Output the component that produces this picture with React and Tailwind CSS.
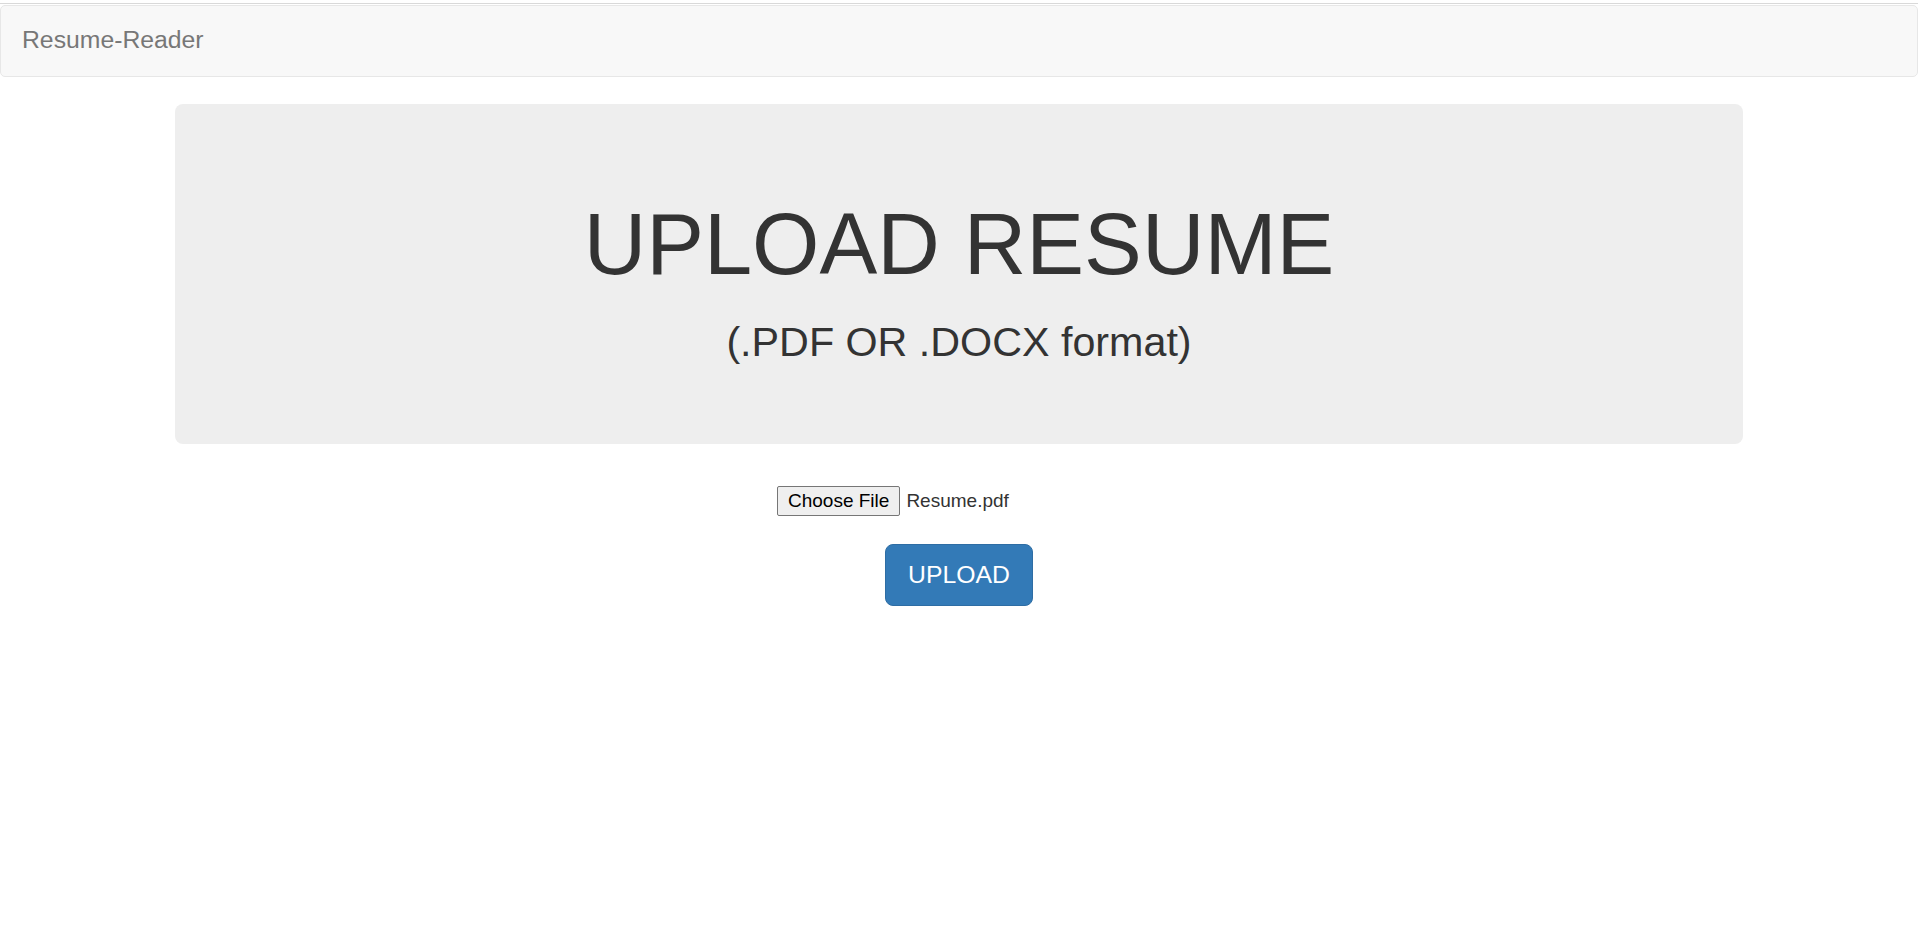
import React from 'react';

const App = () => {
    return (
        <div className="min-h-screen bg-white font-['Liberation_Sans',Arial,sans-serif] text-[#333]">
            <div className="pt-[3px]">
                <div className="h-px bg-[#d9d9d9]" />
            </div>
            <nav className="mt-px h-[72px] rounded-[5px] border border-[#e7e7e7] bg-[#f8f8f8] px-[21px] pt-[20px]">
                <a href="#" className="text-[24.75px] leading-[27.5px] text-[#777]">
                    Resume-Reader
                </a>
            </nav>

            <div className="mx-auto mt-[27px] w-[1568px]">
                <div className="h-[340px] rounded-[8px] bg-[#eeeeee] pt-[93px] text-center">
                    <h1 className="text-[86.6px] leading-[95px]">UPLOAD RESUME</h1>
                    <h2 className="mt-[28px] text-[41.25px] leading-[45px]">(.PDF OR .DOCX format)</h2>
                </div>

                <form className="mt-[42px] flex flex-col items-center" onSubmit={(e) => e.preventDefault()}>
                    <div className="flex w-[364px] items-center">
                        <span className="flex h-[30px] items-center rounded-[2px] border border-[#767676] bg-[#efefef] px-[10px] text-[19px] text-black">
                            Choose File
                        </span>
                        <span className="ml-[6px] text-[19px] text-[#333]">Resume.pdf</span>
                    </div>
                    <button
                        type="submit"
                        className="mt-[28px] h-[62px] w-[148px] rounded-[8px] border border-[#2e6da4] bg-[#337ab7] text-[24.75px] text-white"
                    >
                        UPLOAD
                    </button>
                </form>
            </div>
        </div>
    );
};

export default App;
